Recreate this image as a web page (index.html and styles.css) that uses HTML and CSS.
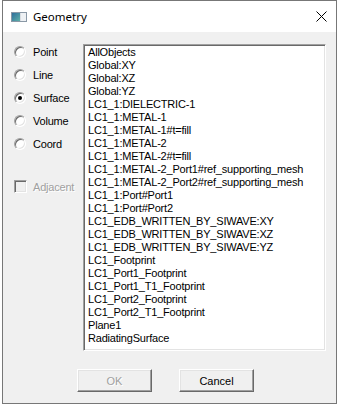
FILE: index.html
```html
<!DOCTYPE html>
<html lang="en">
<head>
  <meta charset="UTF-8">
  <title>Geometry</title>
  <link rel="stylesheet" href="styles.css">
</head>
<body>
  <div class="window">
    <div class="titlebar">
      <svg class="app-icon" width="16" height="10" viewBox="0 0 16 10">
        <defs>
          <linearGradient id="pane" x1="0" y1="0" x2="1" y2="1">
            <stop offset="0" stop-color="#2f6f9c"/>
            <stop offset="1" stop-color="#5fb0a8"/>
          </linearGradient>
        </defs>
        <rect x="0.5" y="0.5" width="15" height="9" fill="#d8dde2" stroke="#8a98a6"/>
        <rect x="1" y="1" width="8" height="8" fill="url(#pane)"/>
        <rect x="10" y="1" width="5" height="8" fill="#eef1f4"/>
      </svg>
      <span class="title">Geometry</span>
      <svg class="close" width="11" height="11" viewBox="0 0 11 11">
        <path d="M0.5 0.5 L10.5 10.5 M10.5 0.5 L0.5 10.5" stroke="#000" stroke-width="1"/>
      </svg>
    </div>

    <div class="client">
      <div class="main">
        <div class="options">
          <label class="opt"><span class="radio"></span>Point</label>
          <label class="opt"><span class="radio"></span>Line</label>
          <label class="opt"><span class="radio checked"></span>Surface</label>
          <label class="opt"><span class="radio"></span>Volume</label>
          <label class="opt"><span class="radio"></span>Coord</label>
          <label class="opt adjacent disabled"><span class="check"></span>Adjacent</label>
        </div>
        <div class="listbox">
          <div class="item">AllObjects</div>
          <div class="item">Global:XY</div>
          <div class="item">Global:XZ</div>
          <div class="item">Global:YZ</div>
          <div class="item">LC1_1:DIELECTRIC-1</div>
          <div class="item">LC1_1:METAL-1</div>
          <div class="item">LC1_1:METAL-1#t=fill</div>
          <div class="item">LC1_1:METAL-2</div>
          <div class="item">LC1_1:METAL-2#t=fill</div>
          <div class="item">LC1_1:METAL-2_Port1#ref_supporting_mesh</div>
          <div class="item">LC1_1:METAL-2_Port2#ref_supporting_mesh</div>
          <div class="item">LC1_1:Port#Port1</div>
          <div class="item">LC1_1:Port#Port2</div>
          <div class="item">LC1_EDB_WRITTEN_BY_SIWAVE:XY</div>
          <div class="item">LC1_EDB_WRITTEN_BY_SIWAVE:XZ</div>
          <div class="item">LC1_EDB_WRITTEN_BY_SIWAVE:YZ</div>
          <div class="item">LC1_Footprint</div>
          <div class="item">LC1_Port1_Footprint</div>
          <div class="item">LC1_Port1_T1_Footprint</div>
          <div class="item">LC1_Port2_Footprint</div>
          <div class="item">LC1_Port2_T1_Footprint</div>
          <div class="item">Plane1</div>
          <div class="item">RadiatingSurface</div>
        </div>
      </div>
      <div class="buttons">
        <button class="btn" disabled>OK</button>
        <button class="btn">Cancel</button>
      </div>
    </div>
  </div>
</body>
</html>
```

FILE: styles.css
```css
body {
  margin: 0;
  background: #fff;
  font-family: "Liberation Sans", Arial, sans-serif;
  font-size: 11px;
  letter-spacing: -0.2px;
  color: #000;
}
.window {
  margin-left: 2px;
  width: 333px;
  height: 402px;
  border: 1px solid #777;
  background: #f0f0f0;
  display: flex;
  flex-direction: column;
}
.titlebar {
  height: 31px;
  background: #fff;
  display: flex;
  align-items: center;
  flex-shrink: 0;
}
.app-icon { margin-left: 8px; margin-top: 1px; }
.title {
  margin-left: 6px;
  font-family: "Noto Sans", "Open Sans", sans-serif;
  font-size: 11.5px;
  letter-spacing: 0;
  color: #000;
}
.close { margin-left: auto; margin-right: 9px; margin-top: -1px; }

.client { flex: 1; display: flex; flex-direction: column; }
.main { display: flex; align-items: flex-start; }

.options {
  width: 80px;
  padding-top: 8px;
  display: flex;
  flex-direction: column;
}
.opt {
  height: 23px;
  display: flex;
  align-items: center;
  padding-left: 11px;
}
.radio {
  width: 10px; height: 10px;
  border-radius: 50%;
  border: 1px solid;
  border-color: #a0a0a0 #fff #fff #a0a0a0;
  box-shadow: inset 1px 1px #696969, inset -1px -1px #e3e3e3;
  background: #fff;
  margin-right: 7px;
  position: relative;
}
.radio.checked::after {
  content: "";
  position: absolute;
  left: 3px; top: 3px;
  width: 4px; height: 4px;
  border-radius: 50%;
  background: #000;
}
.adjacent { margin-top: 20px; }
.check {
  width: 11px; height: 11px;
  border: 1px solid;
  border-color: #a0a0a0 #fff #fff #a0a0a0;
  box-shadow: inset 1px 1px #696969, inset -1px -1px #e3e3e3;
  background: #f0f0f0;
  margin-right: 6px;
}
.disabled { color: #a0a0a0; text-shadow: 1px 1px #fff; }

.listbox {
  margin-top: 12px;
  width: 237px;
  height: 304px;
  border: 1px solid;
  border-color: #a0a0a0 #fff #fff #a0a0a0;
  box-shadow: inset 1px 1px #696969, inset -1px -1px #e3e3e3;
  background: #fff;
  padding: 1px 0 0 4px;
}
.item { height: 13px; line-height: 13px; white-space: nowrap; }

.buttons {
  display: flex;
  gap: 27px;
  padding-left: 74px;
  margin-top: 18px;
}
.btn {
  width: 75px; height: 23px;
  padding: 0;
  font: inherit;
  color: #000;
  background: #f0f0f0;
  border: 1px solid;
  border-color: #fff #696969 #696969 #fff;
  box-shadow: inset -1px -1px #a0a0a0, inset 1px 1px #e3e3e3;
  border-radius: 0;
}
.btn:disabled { color: #a0a0a0; text-shadow: 1px 1px #fff; }
```
